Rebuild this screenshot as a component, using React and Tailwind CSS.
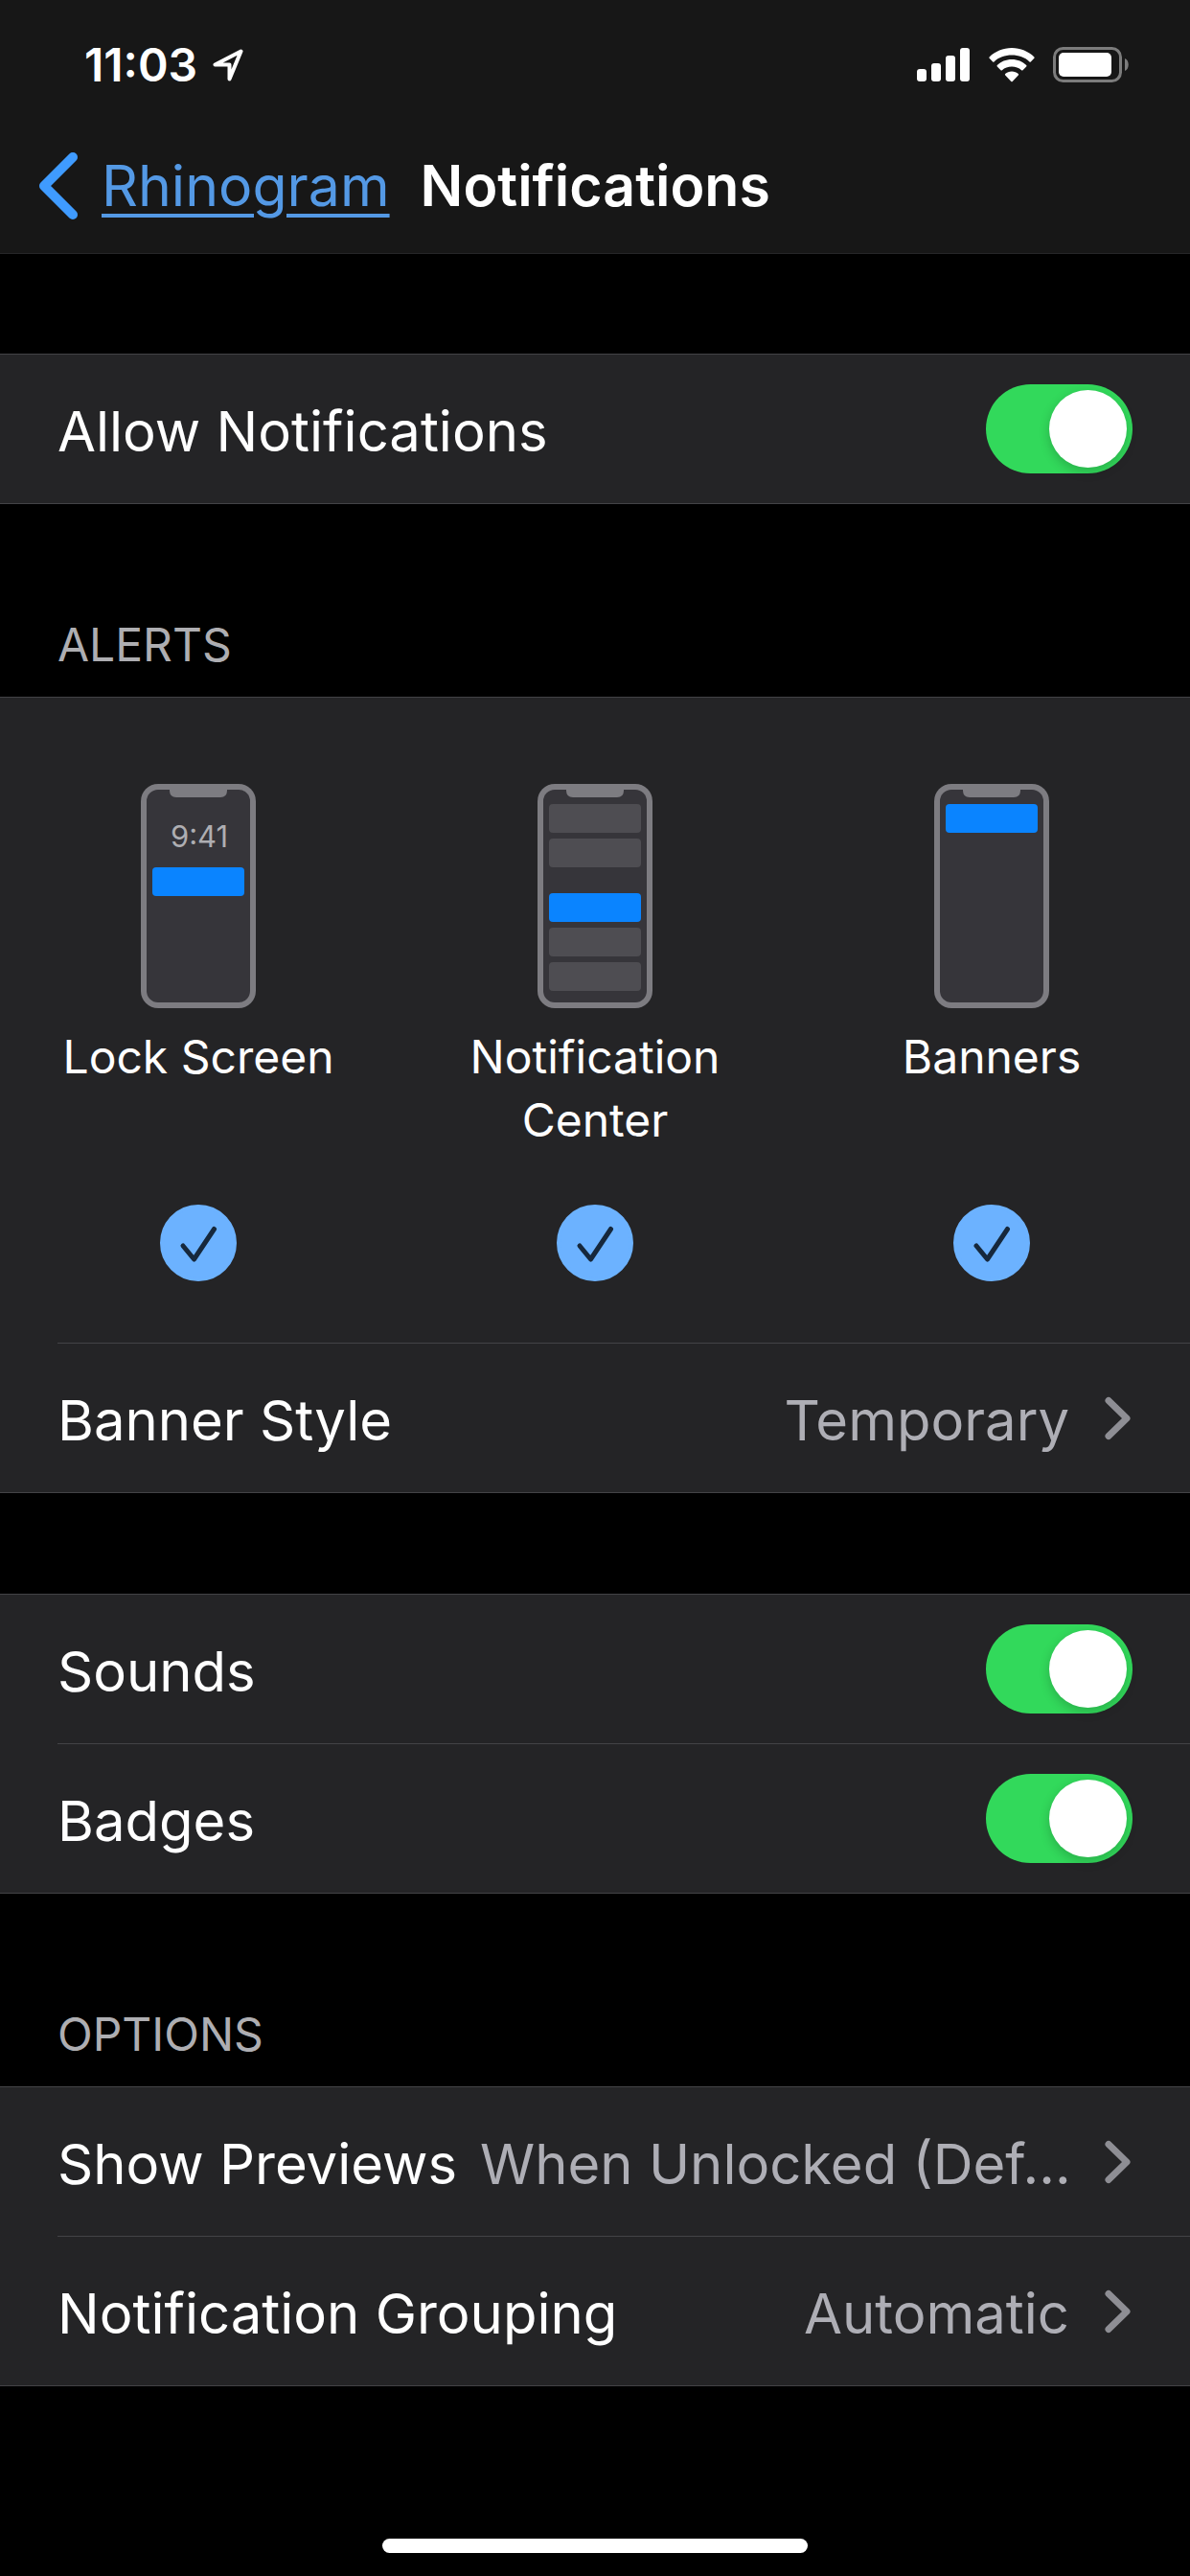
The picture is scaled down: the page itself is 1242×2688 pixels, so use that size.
import React, { useState } from "react";

const BackChevron = () => (
  <svg className="w-[42px] h-[72px] shrink-0" viewBox="0 0 42 72" fill="none">
    <path
      d="M36 6 L6 36 L36 66"
      stroke="#3f9bff"
      strokeWidth="10"
      strokeLinecap="round"
      strokeLinejoin="round"
    />
  </svg>
);

const Chevron = () => (
  <svg className="w-[30px] h-[46px] shrink-0" viewBox="0 0 30 46" fill="none">
    <path
      d="M5 4.5 L24 23 L5 41.5"
      stroke="#8e8e94"
      strokeWidth="7"
      strokeLinecap="round"
      strokeLinejoin="round"
    />
  </svg>
);

const LocationArrow = () => (
  <svg className="w-8 h-[34px]" viewBox="0 0 32 34" fill="none">
    <path
      d="M29.5 2.5 L2.5 16.5 H17.5 V31.5 Z"
      stroke="#fff"
      strokeWidth="4"
      strokeLinejoin="round"
    />
  </svg>
);

const Signal = () => (
  <svg className="w-[56px] h-[36px]" viewBox="0 0 56 36" fill="#fff">
    <rect x="0" y="22" width="10" height="13" rx="3" />
    <rect x="15" y="16" width="10" height="19" rx="3" />
    <rect x="30" y="8" width="10" height="27" rx="3" />
    <rect x="45" y="0" width="10" height="35" rx="3" />
  </svg>
);

const Wifi = () => (
  <svg className="w-12 h-[36px]" viewBox="0 0 48 36" fill="#fff">
    <path d="M24 0 C14.8 0 6.6 3.6 0.6 9.4 Q0 10 0.6 10.7 L4.2 14.4 Q4.8 15 5.5 14.4 C10.3 9.9 16.8 7.6 24 7.6 C31.2 7.6 37.7 9.9 42.5 14.4 Q43.2 15 43.8 14.4 L47.4 10.7 Q48 10 47.4 9.4 C41.4 3.6 33.2 0 24 0 Z" />
    <path d="M24 12 C18 12 12.7 14.3 8.8 18 Q8.1 18.7 8.8 19.4 L12.5 23.2 Q13.2 23.8 13.9 23.2 C16.6 20.9 20.1 19.6 24 19.6 C27.9 19.6 31.4 20.9 34.1 23.2 Q34.8 23.8 35.5 23.2 L39.2 19.4 Q39.9 18.7 39.2 18 C35.3 14.3 30 12 24 12 Z" />
    <path d="M24 24.5 C21.3 24.5 19 25.4 17.2 26.9 Q16.5 27.6 17.2 28.4 L23.3 34.9 Q24 35.7 24.7 34.9 L30.8 28.4 Q31.5 27.6 30.8 26.9 C29 25.4 26.7 24.5 24 24.5 Z" />
  </svg>
);

const Battery = () => (
  <svg className="w-20 h-[38px]" viewBox="0 0 80 38" fill="none">
    <rect x="1.5" y="1.5" width="69" height="34" rx="9" stroke="#7c7c7c" strokeWidth="3" />
    <rect x="6" y="6" width="55" height="25" rx="5" fill="#fff" />
    <path d="M75 12 C80 14 80 23 75 25 Z" fill="#7c7c7c" />
  </svg>
);

// Miniature phone used above each alert style
const Phone = ({ time, bars }) => (
  <svg className="w-[120px] h-[234px]" viewBox="0 0 120 234" fill="none">
    <rect width="120" height="234" rx="18" fill="#7d7c81" />
    <rect x="6" y="6" width="108" height="222" rx="12" fill="#36353a" />
    <path d="M30 5 H90 V7 Q90 14 83 14 H37 Q30 14 30 7 Z" fill="#7d7c81" />
    {time && (
      <text
        x="61"
        y="66"
        textAnchor="middle"
        fontSize="31"
        fill="#aeaeb2"
        fontFamily="Inter, sans-serif"
      >
        {time}
      </text>
    )}
    {bars.map((bar) => (
      <rect
        key={bar.y}
        x="12"
        y={bar.y}
        width="96"
        height="30"
        rx="4"
        fill={bar.active ? "#0a84ff" : "#4e4d52"}
      />
    ))}
  </svg>
);

const alertStyles = [
  {
    id: "lock-screen",
    label: "Lock Screen",
    time: "9:41",
    bars: [{ y: 87, active: true }],
  },
  {
    id: "notification-center",
    label: "Notification Center",
    bars: [
      { y: 21 },
      { y: 57 },
      { y: 114, active: true },
      { y: 150 },
      { y: 186 },
    ],
  },
  {
    id: "banners",
    label: "Banners",
    bars: [{ y: 21, active: true }],
  },
];

const Section = ({ children }) => (
  <section className="bg-[#242426] border-y border-[#434346]">{children}</section>
);

const SectionTitle = ({ children }) => (
  <h2 className="flex items-end h-[201px] px-[60px] pb-6 text-[48px] leading-[60px] text-[#aeaeb2]">
    {children}
  </h2>
);

const Divider = () => <div className="ml-[60px] h-px bg-[#434346]" />;

const ToggleRow = ({ id, label }) => {
  const [on, setOn] = useState(true);

  return (
    <div className="flex items-center justify-between h-[155px] px-[60px]">
      <label htmlFor={id} className="pt-1 text-[58px] leading-[72px]">
        {label}
      </label>
      <input
        id={id}
        type="checkbox"
        role="switch"
        checked={on}
        onChange={() => setOn(!on)}
        className="appearance-none flex items-center w-[153px] h-[93px] p-[6px] rounded-full cursor-pointer bg-[#39393d] checked:bg-[#32d95b] checked:justify-end before:content-[''] before:w-[81px] before:h-[81px] before:rounded-full before:bg-white before:shadow-[0_4px_12px_rgba(0,0,0,0.2)]"
      />
    </div>
  );
};

const LinkRow = ({ label, value }) => (
  <button
    type="button"
    className="flex items-center w-full h-[155px] px-[60px] text-left text-[58px] leading-[72px] cursor-pointer"
  >
    <span className="pt-1 whitespace-nowrap">{label}</span>
    <span className="flex-1 min-w-0 pt-1 pl-6 text-right whitespace-nowrap text-[#aeaeb5]">
      {value}
    </span>
    <span className="flex pl-9">
      <Chevron />
    </span>
  </button>
);

const AlertOption = ({ id, label, time, bars }) => {
  const [checked, setChecked] = useState(true);

  return (
    <div className="flex flex-col items-center">
      <Phone time={time} bars={bars} />
      <label
        htmlFor={id}
        className="mt-[18px] h-[132px] max-w-[340px] text-center text-[48px] leading-[66px]"
      >
        {label}
      </label>
      <div className="relative mt-[55px] w-20 h-20">
        <input
          id={id}
          type="checkbox"
          checked={checked}
          onChange={() => setChecked(!checked)}
          className="peer block appearance-none w-20 h-20 rounded-full border-4 border-[#6e6e73] cursor-pointer checked:border-[#6cb2ff] checked:bg-[#6cb2ff]"
        />
        <svg
          className="absolute inset-0 w-20 h-20 pointer-events-none invisible peer-checked:visible"
          viewBox="0 0 80 80"
          fill="none"
        >
          <path
            d="M24 43 L35.5 57 L56.5 25.5"
            stroke="#16283c"
            strokeWidth="5"
            strokeLinecap="round"
            strokeLinejoin="round"
          />
        </svg>
      </div>
    </div>
  );
};

const App = () => {
  return (
    <div className="flex flex-col min-h-screen bg-black text-white font-['Inter',sans-serif]">
      <header className="bg-[#171717] border-b border-[#262628] pb-3">
        {/* Status Bar */}
        <div className="flex items-center justify-between h-[136px] pl-[88px] pr-[63px]">
          <div className="flex items-center gap-4">
            <span className="text-[48px] leading-[56px] font-semibold">11:03</span>
            <LocationArrow />
          </div>
          <div className="flex items-center gap-[19px]">
            <Signal />
            <Wifi />
            <Battery />
          </div>
        </div>

        {/* Navigation */}
        <nav className="flex items-center h-[116px] pl-10">
          <a href="#rhinogram" className="flex items-center gap-6 text-[#5499e5]">
            <BackChevron />
            <span className="text-[59px] leading-[72px] underline decoration-4 underline-offset-8">
              Rhinogram
            </span>
          </a>
          <h1 className="ml-8 text-[59px] leading-[72px] font-semibold">Notifications</h1>
        </nav>
      </header>

      <main className="flex-1 pt-[104px]">
        <Section>
          <ToggleRow id="allow-notifications" label="Allow Notifications" />
        </Section>

        {/* Alerts */}
        <SectionTitle>ALERTS</SectionTitle>
        <Section>
          <div className="grid grid-cols-3 pt-[90px] pb-16">
            {alertStyles.map((style) => (
              <AlertOption key={style.id} {...style} />
            ))}
          </div>
          <Divider />
          <LinkRow label="Banner Style" value="Temporary" />
        </Section>

        <div className="mt-[105px]">
          <Section>
            <ToggleRow id="sounds" label="Sounds" />
            <Divider />
            <ToggleRow id="badges" label="Badges" />
          </Section>
        </div>

        {/* Options */}
        <SectionTitle>OPTIONS</SectionTitle>
        <Section>
          <LinkRow label="Show Previews" value="When Unlocked (Def..." />
          <Divider />
          <LinkRow label="Notification Grouping" value="Automatic" />
        </Section>
      </main>

      {/* Home Indicator */}
      <footer className="flex justify-center pb-6">
        <div className="w-[444px] h-[15px] rounded-full bg-white" />
      </footer>
    </div>
  );
};

export default App;
